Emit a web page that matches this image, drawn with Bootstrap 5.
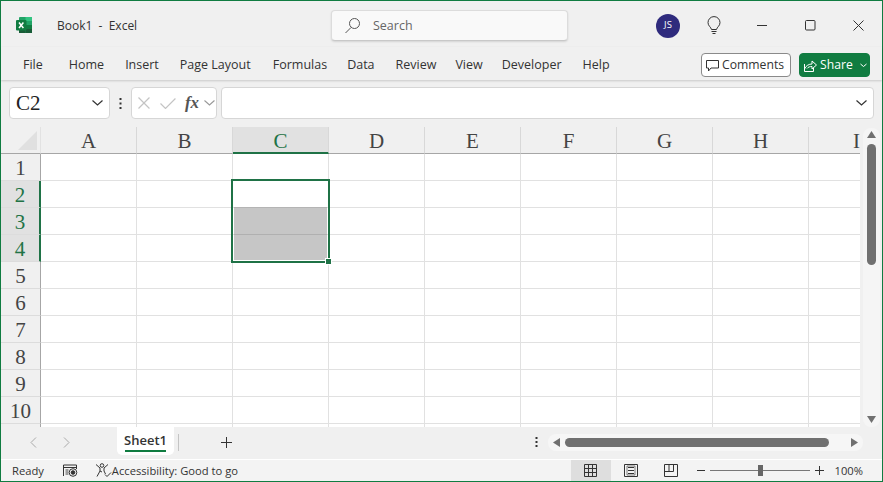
<!DOCTYPE html>
<html lang="en">
<head>
<meta charset="utf-8">
<title>Book1 - Excel</title>
<link rel="stylesheet" href="https://cdn.jsdelivr.net/npm/bootstrap@5.3.0/dist/css/bootstrap.min.css">
<style>
html,body{height:100%;overflow:hidden}
body{background:#f0f0f0;font-family:"Open Sans","Noto Sans",sans-serif;font-size:12.5px;color:#333}
.xl-win{height:482px;width:883px;border:1px solid #107c41;background:#f0f0f0}
.xl-title{height:46px;padding-left:15px;padding-top:3px}
.xl-name{margin-left:22px;font-size:12px;width:274px;white-space:pre;padding-top:1px}
.xl-search{width:237px;height:31px;background:#f9f9f9;border:1px solid #dcdcdc;border-bottom-color:#c8c8c8;border-radius:4px;box-shadow:0 1px 2px rgba(0,0,0,.12);padding-left:12px;color:#666;font-size:12.5px;gap:12px}
.xl-search span{padding-top:1px}
.xl-avatar{width:24px;height:24px;border-radius:50%;background:#2f2b7d;color:#fff;font-size:9.5px;margin-left:88px}
.xl-bulb{margin-left:27px}
.xl-min{margin-left:36px}
.xl-wbtn{margin-left:37px}
.xl-menu{height:33px;padding-left:22px;padding-right:12px;padding-top:2px;box-shadow:0 1px 2px rgba(0,0,0,.16);position:relative}
.xl-tabs{gap:21px;padding-top:1px}
.xl-tabs span:nth-child(1){margin-right:5px}
.xl-tabs span:nth-child(4){margin-right:1px}
.xl-tabs span:nth-child(5){margin-right:-1px}
.xl-tabs span:nth-child(7),.xl-tabs span:nth-child(8){margin-right:-2px}
.xl-btn{height:24px;padding:0;font-size:12.2px;border-radius:4px;line-height:1;display:flex;align-items:center}
.xl-comments{width:90px;background:#fff;border:1px solid #8a8a8a;color:#333;padding:1px 0 0 4px;gap:3px}
.xl-share{width:71px;background:#107c41;border:1px solid #107c41;color:#fff;margin-left:8px;padding:1px 0 0 4px;gap:3px}
.xl-share:hover{background:#107c41;color:#fff}
.xl-fbar{height:47px;padding:7px 8px 8px 8px}
.xl-box{height:32px;background:#fff;border:1px solid #d6d6d6;border-radius:4px}
.xl-namebox{width:101px;padding:0 6px;font:21px "Liberation Serif",serif;color:#222}
.xl-fx{width:86px;padding:0 1px 0 6px}
.xl-check{margin-left:10px}
.xl-fxtxt{font:italic 700 17px "Liberation Serif",serif;color:#555;margin-left:9px;margin-right:5px}
.xl-input{margin-left:4px;padding-right:6px}
.xl-dots{width:21px}
.xl-sheetrow{height:300px}
.xl-gridwrap{width:859px;height:300px;overflow:hidden;position:relative;flex:none}
.xl-tbl{border-collapse:separate;border-spacing:0;table-layout:fixed;width:904px;background:#fff}
.xl-tbl th,.xl-tbl td{height:27px;padding:0;text-align:center;vertical-align:middle;border-right:1px solid #e1e1e1;border-bottom:1px solid #e1e1e1;font:400 21px/1 "Liberation Serif",serif;color:#444}
.xl-tbl th{background:#f0f0f0}
.xl-tbl thead th{border-bottom-color:#a6a6a6;border-right-color:#d8d8d8;padding-top:3px}
.xl-tbl tbody th{border-right-color:#a6a6a6;border-bottom-color:#dcdcdc;padding-top:2px}
.xl-tbl thead th.xl-corner{border-right-color:#e2e2e2;border-bottom-color:#a6a6a6;position:relative}
.xl-tri{position:absolute;left:17px;top:4px;width:19px;height:19px;background:#e0e0e0;clip-path:polygon(100% 0,100% 100%,0 100%)}
.xl-tbl thead th.xl-on{background:#e1e1e1;color:#217346;border-bottom:2px solid #1f7246}
.xl-tbl tbody th.xl-on{background:#e1e1e1;color:#217346;border-right:2px solid #1f7246}
.xl-sel{position:absolute;left:230px;top:52px;width:99px;height:84px;border:2px solid #1f7246;pointer-events:none}
.xl-shade{position:absolute;left:1px;right:1px;top:26px;bottom:1px;background:#c6c6c6}
.xl-shade i{display:block;height:1px;background:#b0b0b0;margin-top:27px}
.xl-shade b{position:absolute;left:0;right:0;top:0;height:1px;background:#b4b4b4}
.xl-handle{position:absolute;right:-4px;bottom:-4px;width:7px;height:7px;background:#1f7246;border:1px solid #fff;box-sizing:border-box}
.xl-vbar{width:17px;height:299px;margin-left:3px;margin-top:1px;background:#f5f5f5;border-radius:8px;padding:3px 0 0}
.xl-vthumb{width:9px;height:121px;background:#707070;border-radius:5px;margin:6px 0 0}
.xl-sheets{height:32px;padding-bottom:2px}
.xl-navl{margin-left:28px}
.xl-navr{margin-left:26px}
.xl-tab{width:57px;height:28px;background:#fff;border-radius:0 0 5px 5px;margin-left:46px;font-weight:600;font-size:13px;line-height:1;padding-bottom:3px}
.xl-tabline{width:41px;height:2px;background:#107c41;margin-top:3px}
.xl-tabsep{margin-left:4px}
.xl-plus{margin-left:42px}
.xl-hbar{width:315px;height:17px;background:#f6f6f6;border-radius:8px;margin-left:10px;margin-right:19px;padding:0 5px}
.xl-hthumb{width:264px;height:9px;background:#707070;border-radius:5px;margin:0 auto 0 5px}
.xl-status{height:22px;background:#f3f3f3;border-top:1px solid #fff;padding-left:11px;font-size:11.2px}
.xl-stxt{padding-top:2px}
.xl-macro{margin-left:19px}
.xl-acc{margin-left:17px}
.xl-view{width:40px;height:21px}
.xl-view.xl-act{background:#dedede}
.xl-zoom{margin-left:6px}
.xl-slider{width:100px;height:1px;background:#777;position:relative;margin:0 5px}
.xl-knob{position:absolute;left:48px;top:-5px;width:5px;height:11px;background:#666}
.xl-pct{margin-left:11px;margin-right:19px}
</style>
</head>
<body>
<div class="xl-win d-flex flex-column">
  <div class="xl-title d-flex align-items-center">
    <svg width="19" height="17" viewBox="0 0 19 17">
      <rect x="3" y="0" width="13" height="16" rx="1" fill="#21a366"/>
      <rect x="9.5" y="0" width="6.5" height="4" fill="#33c481"/>
      <rect x="9.5" y="4" width="6.5" height="4" fill="#21a366"/>
      <rect x="9.5" y="8" width="6.5" height="4" fill="#107c41"/>
      <rect x="3" y="8" width="6.5" height="8" fill="#185c37"/>
      <rect x="9.5" y="12" width="6.5" height="4" fill="#185c37"/>
      <rect x="0" y="3" width="10.5" height="10.5" rx="1" fill="#107c41"/>
      <path d="M3 5.5l4.4 5.5M7.4 5.5L3 11" stroke="#fff" stroke-width="1.5"/>
    </svg>
    <div class="xl-name">Book1  -  Excel</div>
    <div class="xl-search d-flex align-items-center">
      <svg width="17" height="17" viewBox="0 0 17 17" fill="none" stroke="#555"><circle cx="10.5" cy="6.5" r="5"/><path d="M7 10.5L1.500 16"/></svg>
      <span>Search</span>
    </div>
    <div class="xl-avatar d-flex align-items-center justify-content-center">JS</div>
    <svg class="xl-bulb" width="14" height="20" viewBox="0 0 14 20" fill="none" stroke="#333"><path d="M4.500 13.500C4 11 1 10 1 6.600a6 6 0 0 1 12 0c0 3.400-3 4.400-3.500 6.900z"/><path d="M4.500 15.500h5M5.500 17.500h3" stroke-width="1.200"/></svg>
    <svg class="xl-min" width="11" height="11" viewBox="0 0 11 11" fill="none" stroke="#333"><path d="M0 5.500h10"/></svg>
    <svg class="xl-wbtn" width="11" height="11" viewBox="0 0 11 11" fill="none" stroke="#333"><rect x=".5" y=".5" width="9.500" height="9.500" rx="1"/></svg>
    <svg class="xl-wbtn" width="11" height="11" viewBox="0 0 11 11" fill="none" stroke="#333"><path d="M.5.500l10 10M10.500.500l-10 10"/></svg>
  </div>
  <div class="xl-menu d-flex align-items-center">
    <div class="xl-tabs d-flex flex-grow-1">
      <span>File</span><span>Home</span><span>Insert</span><span>Page Layout</span><span>Formulas</span><span>Data</span><span>Review</span><span>View</span><span>Developer</span><span>Help</span>
    </div>
    <button class="btn xl-btn xl-comments" type="button">
      <svg width="13" height="13" viewBox="0 0 13 13" fill="none" stroke="#333"><path d="M.5 1.500h12v7.500H5L2.500 12V9H.5z"/></svg>Comments
    </button>
    <button class="btn xl-btn xl-share" type="button">
      <svg width="13" height="13" viewBox="0 0 13 13" fill="none" stroke="#fff"><path d="M.5 5v7.500h9V9M.5 10C2 6.500 5 5 8 5V2l4.500 4L8 10V7.500c-2 0-4 .500-5 2"/></svg>Share
      <svg class="ms-1" width="7" height="5" viewBox="0 0 7 5" fill="none" stroke="#fff"><path d="M.5 1l3 2.500 3-2.500"/></svg>
    </button>
  </div>
  <div class="xl-fbar d-flex align-items-center">
    <div class="xl-box xl-namebox d-flex align-items-center justify-content-between">
      <span>C2</span>
      <svg width="11" height="6" viewBox="0 0 11 6" fill="none" stroke="#333" stroke-width="1.200"><path d="M.5.500l5 4.500 5-4.500"/></svg>
    </div>
    <div class="xl-dots d-flex flex-column align-items-center">
      <svg width="3" height="11" viewBox="0 0 3 11" fill="#333"><rect x=".5" y="0" width="2" height="2"/><rect x=".5" y="4.500" width="2" height="2"/><rect x=".5" y="9" width="2" height="2"/></svg>
    </div>
    <div class="xl-box xl-fx d-flex align-items-center">
      <svg width="12" height="12" viewBox="0 0 12 12" fill="none" stroke="#c4c4c4" stroke-width="1.200"><path d="M.5.500l11 11M11.500.500l-11 11"/></svg>
      <svg class="xl-check" width="16" height="11" viewBox="0 0 16 11" fill="none" stroke="#c4c4c4" stroke-width="1.200"><path d="M.5 5.500l5 5L15.500.500"/></svg>
      <span class="xl-fxtxt">fx</span>
      <svg width="11" height="6" viewBox="0 0 11 6" fill="none" stroke="#999" stroke-width="1.100"><path d="M.5.500l5 4.500 5-4.500"/></svg>
    </div>
    <div class="xl-box xl-input flex-grow-1 d-flex align-items-center justify-content-end">
      <svg width="11" height="6" viewBox="0 0 11 6" fill="none" stroke="#333" stroke-width="1.200"><path d="M.5.500l5 4.500 5-4.500"/></svg>
    </div>
  </div>
  <div class="xl-sheetrow d-flex">
    <div class="xl-gridwrap">
      <table class="xl-tbl">
        <colgroup><col style="width:40px"><col style="width:96px"><col style="width:96px"><col style="width:96px"><col style="width:96px"><col style="width:96px"><col style="width:96px"><col style="width:96px"><col style="width:96px"></colgroup>
        <thead><tr><th class="xl-corner"><div class="xl-tri"></div></th><th>A</th><th>B</th><th class="xl-on">C</th><th>D</th><th>E</th><th>F</th><th>G</th><th>H</th><th>I</th></tr></thead>
        <tbody>
          <tr><th>1</th><td></td><td></td><td></td><td></td><td></td><td></td><td></td><td></td><td></td></tr>
          <tr><th class="xl-on">2</th><td></td><td></td><td></td><td></td><td></td><td></td><td></td><td></td><td></td></tr>
          <tr><th class="xl-on">3</th><td></td><td></td><td></td><td></td><td></td><td></td><td></td><td></td><td></td></tr>
          <tr><th class="xl-on">4</th><td></td><td></td><td></td><td></td><td></td><td></td><td></td><td></td><td></td></tr>
          <tr><th>5</th><td></td><td></td><td></td><td></td><td></td><td></td><td></td><td></td><td></td></tr>
          <tr><th>6</th><td></td><td></td><td></td><td></td><td></td><td></td><td></td><td></td><td></td></tr>
          <tr><th>7</th><td></td><td></td><td></td><td></td><td></td><td></td><td></td><td></td><td></td></tr>
          <tr><th>8</th><td></td><td></td><td></td><td></td><td></td><td></td><td></td><td></td><td></td></tr>
          <tr><th>9</th><td></td><td></td><td></td><td></td><td></td><td></td><td></td><td></td><td></td></tr>
          <tr><th>10</th><td></td><td></td><td></td><td></td><td></td><td></td><td></td><td></td><td></td></tr>
          <tr><th></th><td></td><td></td><td></td><td></td><td></td><td></td><td></td><td></td><td></td></tr>
        </tbody>
      </table>
      <div class="xl-sel"><div class="xl-shade"><b></b><i></i></div><div class="xl-handle"></div></div>
    </div>
    <div class="xl-vbar d-flex flex-column align-items-center">
      <svg width="9" height="7" viewBox="0 0 9 7" fill="#707070"><path d="M4.500 0L9 7H0z"/></svg>
      <div class="xl-vthumb"></div>
      <svg class="mt-auto mb-1" width="9" height="7" viewBox="0 0 9 7" fill="#707070"><path d="M4.500 7L9 0H0z"/></svg>
    </div>
  </div>
  <div class="xl-sheets d-flex align-items-center">
    <svg class="xl-navl" width="8" height="13" viewBox="0 0 8 13" fill="none" stroke="#aaa"><path d="M7 1.500L2 6.500l5 5"/></svg>
    <svg class="xl-navr" width="8" height="13" viewBox="0 0 8 13" fill="none" stroke="#aaa"><path d="M1 1.500l5 5-5 5"/></svg>
    <div class="xl-tab d-flex flex-column align-items-center justify-content-end align-self-start">
      <span>Sheet1</span><div class="xl-tabline"></div>
    </div>
    <svg class="xl-tabsep" width="1" height="17" viewBox="0 0 1 17"><rect width="1" height="17" fill="#c4c4c4"/></svg>
    <svg class="xl-plus" width="11" height="11" viewBox="0 0 11 11" fill="none" stroke="#333"><path d="M5.500 0v11M0 5.500h11"/></svg>
    <svg width="3" height="10" viewBox="0 0 3 10" fill="#333" class="ms-auto"><rect x=".5" width="2" height="2"/><rect x=".5" y="4" width="2" height="2"/><rect x=".5" y="8" width="2" height="2"/></svg>
    <div class="xl-hbar d-flex align-items-center">
      <svg width="7" height="9" viewBox="0 0 7 9" fill="#707070"><path d="M0 4.500L7 0v9z"/></svg>
      <div class="xl-hthumb"></div>
      <svg width="7" height="9" viewBox="0 0 7 9" fill="#707070"><path d="M7 4.500L0 0v9z"/></svg>
    </div>
  </div>
  <div class="xl-status d-flex align-items-center">
    <span class="xl-stxt">Ready</span>
    <svg class="xl-macro" width="15" height="13" viewBox="0 0 15 13" fill="none" stroke="#333"><path d="M.5 12V1h13v4M.5 3.500h13"/><path d="M2.500 6h3M2.500 8h3M2.500 10h3" stroke-width=".9"/><circle cx="10" cy="8.500" r="3.800"/><circle cx="10" cy="8.500" r="1.800" fill="#333"/></svg>
    <svg class="xl-acc" width="17" height="15" viewBox="0 0 17 15" fill="none" stroke="#333"><circle cx="7" cy="2.500" r="1.800"/><path d="M1 1.500l4 3.500v3L2 13.500M13 1.500L9 5v3l1.500 3M5 8l2 1"/><path d="M10 11.500l2 2 4-4"/></svg>
    <span class="xl-stxt">Accessibility: Good to go</span>
    <div class="ms-auto xl-view xl-act d-flex align-items-center justify-content-center">
      <svg width="13" height="13" viewBox="0 0 13 13" fill="none" stroke="#333"><path d="M.5.500h12v12H.5zM.5 4.500h12M.5 8.500h12M4.500.500v12M8.500.500v12"/></svg>
    </div>
    <div class="xl-view d-flex align-items-center justify-content-center">
      <svg width="14" height="13" viewBox="0 0 14 13" fill="none" stroke="#333"><path d="M.5.500h13v12H.5zM4 3.500h6M4 6.500h6M4 9.500h6"/><path d="M3 2v9h8V2z" stroke-width=".6"/></svg>
    </div>
    <div class="xl-view d-flex align-items-center justify-content-center">
      <svg width="14" height="13" viewBox="0 0 14 13" fill="none" stroke="#333"><path d="M.5.500h13v12H.5zM.5 7.500h9M5 .5v7M9.500.5v7"/></svg>
    </div>
    <span class="xl-zoom d-flex align-items-center">
      <svg width="8" height="1" viewBox="0 0 8 1"><rect width="8" height="1" fill="#333"/></svg>
      <span class="xl-slider"><span class="xl-knob"></span></span>
      <svg width="9" height="9" viewBox="0 0 9 9" fill="none" stroke="#333"><path d="M4.500 0v9M0 4.500h9"/></svg>
    </span>
    <span class="xl-pct xl-stxt">100%</span>
  </div>
</div>
</body>
</html>
